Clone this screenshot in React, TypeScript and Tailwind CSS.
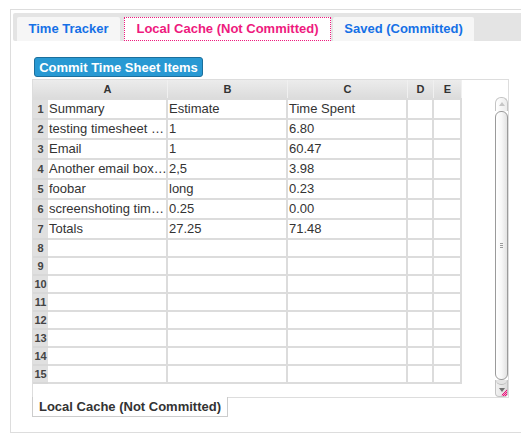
import { ReactNode } from 'react';

const cols = [
    { key: 'A', w: 'w-[120px]' },
    { key: 'B', w: 'w-[120px]' },
    { key: 'C', w: 'w-[120px]' },
    { key: 'D', w: 'w-[26px]' },
    { key: 'E', w: 'w-[28px]' },
];

const rows: string[][] = [
    ['Summary', 'Estimate', 'Time Spent'],
    ['testing timesheet …', '1', '6.80'],
    ['Email', '1', '60.47'],
    ['Another email box…', '2,5', '3.98'],
    ['foobar', 'long', '0.23'],
    ['screenshoting tim…', '0.25', '0.00'],
    ['Totals', '27.25', '71.48'],
];

const TOTAL_ROWS = 15;

function Tab({ children, active, className }: { children: ReactNode; active?: boolean; className: string }) {
    return (
        <div
            className={
                active
                    ? `flex h-[24px] items-center justify-center border border-dotted border-[#ee1a7e] bg-white text-[13px] font-bold text-[#ee1a7e] ${className}`
                    : `flex h-[24px] items-center justify-center rounded-t-[2px] bg-[#f6f6f6] text-[13px] font-bold text-[#1570e6] ${className}`
            }
        >
            {children}
        </div>
    );
}

function Scrollbar() {
    return (
        <div className="flex h-full w-[13px] flex-col">
            {/* up button */}
            <div className="flex h-[14px] items-start justify-center rounded-t-[6px] border border-b-0 border-[#c4c4c4] bg-gradient-to-r from-white to-[#ececec] pt-[4px]">
                <svg width="6" height="4" viewBox="0 0 6 4"><path d="M0 4 L3 0 L6 4 Z" fill="#c6c6c6" /></svg>
            </div>
            {/* thumb */}
            <div className="relative flex flex-1 items-center justify-center rounded-[6px] border border-[#9a9a9a] bg-gradient-to-r from-white via-[#f7f7f7] to-[#e2e2e2]">
                <div className="flex flex-col gap-[1px]">
                    <div className="h-px w-[3px] bg-[#9a9a9a]" />
                    <div className="h-px w-[3px] bg-[#9a9a9a]" />
                    <div className="h-px w-[3px] bg-[#9a9a9a]" />
                </div>
            </div>
            {/* down button */}
            <div className="relative h-[17px] rounded-b-[4px] border border-t-0 border-[#c4c4c4] bg-gradient-to-r from-[#f2f2f2] to-[#dcdcdc]">
                <div className="mx-auto h-[5px] w-[11px] rounded-b-[5px] border-b border-[#bbb] bg-[#e4e4e4]" />
                <svg className="absolute left-[3px] top-[8px]" width="6" height="4" viewBox="0 0 6 4"><path d="M0 0 L6 0 L3 4 Z" fill="#6f6f6f" /></svg>
                <svg className="absolute bottom-0 right-0" width="6" height="7" viewBox="0 0 6 7">
                    <path d="M6 0 L6 7 L0 7 Z" fill="#f3a3c8" />
                    <path d="M5 1h1v1h-1zM3 3h1v1h-1zM5 3h1v1h-1zM1 5h1v1h-1zM3 5h1v1h-1zM5 5h1v1h-1zM2 6h1v1h-1zM4 6h1v1h-1zM4 2h1v1h-1zM2 4h1v1h-1zM4 4h1v1h-1z" fill="#e8137c" />
                </svg>
            </div>
        </div>
    );
}

export default function App() {
    return (
        <div className="h-[437px] w-[521px] overflow-hidden bg-white font-['Liberation_Sans',Arial,sans-serif]">
            <div className="ml-[10px] mt-[9px] h-[424px] w-[540px] border border-[#dddddd] px-[2px] pt-[3px]">
                {/* tab strip */}
                <div className="flex h-[28px] items-end rounded-[2px] bg-[#e4e4e4] pl-[4px]">
                    <Tab className="w-[103px]">Time Tracker</Tab>
                    <Tab active className="ml-[4px] w-[207px]">Local Cache (Not Committed)</Tab>
                    <Tab className="ml-[2px] w-[141px]">Saved (Committed)</Tab>
                </div>

                <div className="pl-[19px]">
                    <button className="ml-[2px] mt-[16px] flex h-[20px] w-[169px] items-center justify-center rounded-[3px] border border-[#1c6f9c] bg-[#2899d3] text-[13px] font-bold leading-none text-white">
                        Commit Time Sheet Items
                    </button>

                    <div className="mt-[2px] flex h-[319px] w-[477px] justify-between border border-[#dddddd] bg-white">
                        <div className="w-[429px]">
                            {/* column headers */}
                            <div className="flex h-[18px] bg-gradient-to-b from-[#ececec] to-[#dcdcdc]">
                                <div className="w-[15px]" />
                                {cols.map(c => (
                                    <div key={c.key} className={`${c.w} flex items-center justify-center border-r border-[#f0f0f0] text-[11px] font-bold text-[#333]`}>
                                        {c.key}
                                    </div>
                                ))}
                            </div>
                            <div className="h-[2px] bg-[#dcdcdc]" />
                            {Array.from({ length: TOTAL_ROWS }, (_, i) => {
                                const data = rows[i];
                                return (
                                    <div key={i} className={`flex ${data ? 'h-[20px]' : 'h-[18px]'}`}>
                                        <div className="flex w-[15px] items-center justify-center border-b-2 border-[#d8d8d8] bg-[#e0e0e0] text-[11px] font-bold leading-none text-[#444]">
                                            {i + 1}
                                        </div>
                                        {cols.map((c, j) => (
                                            <div key={c.key} className={`${c.w} flex items-center overflow-hidden whitespace-nowrap border-b-2 border-r-2 border-[#dcdcdc] px-[1px] text-[13px] text-[#333]`}>
                                                {data?.[j] ?? ''}
                                            </div>
                                        ))}
                                    </div>
                                );
                            })}
                        </div>
                        <div className="pt-[17px]">
                            <Scrollbar />
                        </div>
                    </div>

                    <div className="-mt-px flex h-[20px] w-[196px] items-center justify-center border border-t-0 border-[#cccccc] bg-white text-[13px] font-bold text-[#333]">
                        Local Cache (Not Committed)
                    </div>
                </div>
            </div>
        </div>
    );
}
